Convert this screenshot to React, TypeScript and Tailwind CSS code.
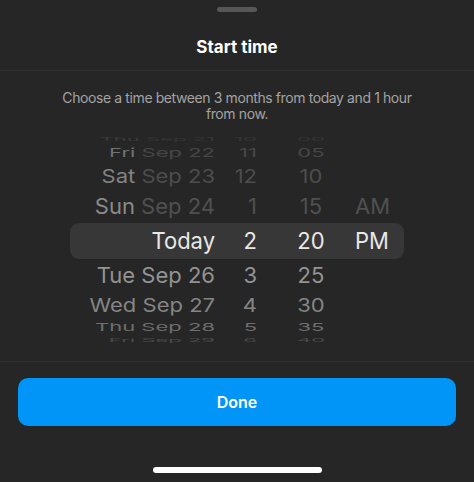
import React from 'react';

type Cell = { text: string; color: string };
type Row = {
  h: string;
  scale: string;
  day?: Cell;
  date?: Cell;
  hour?: Cell;
  minute?: Cell;
  period?: Cell;
  selected?: boolean;
};

const rows: Row[] = [
  {
    h: 'h-[7px]',
    scale: 'scale-y-[0.22]',
    day: { text: 'Thu', color: 'text-[#3a3a3a]' },
    date: { text: 'Sep 21', color: 'text-[#353535]' },
    hour: { text: '10', color: 'text-[#353535]' },
    minute: { text: '00', color: 'text-[#353535]' },
  },
  {
    h: 'h-[22px]',
    scale: 'scale-y-[0.55]',
    day: { text: 'Fri', color: 'text-[#727272]' },
    date: { text: 'Sep 22', color: 'text-[#464646]' },
    hour: { text: '11', color: 'text-[#464646]' },
    minute: { text: '05', color: 'text-[#464646]' },
  },
  {
    h: 'h-[24px]',
    scale: 'scale-y-[0.85]',
    day: { text: 'Sat', color: 'text-[#838383]' },
    date: { text: 'Sep 23', color: 'text-[#4d4d4d]' },
    hour: { text: '12', color: 'text-[#4d4d4d]' },
    minute: { text: '10', color: 'text-[#4d4d4d]' },
  },
  {
    h: 'h-[35px]',
    scale: 'scale-y-100',
    day: { text: 'Sun', color: 'text-[#8a8a8a]' },
    date: { text: 'Sep 24', color: 'text-[#505050]' },
    hour: { text: '1', color: 'text-[#505050]' },
    minute: { text: '15', color: 'text-[#505050]' },
    period: { text: 'AM', color: 'text-[#505050]' },
  },
  {
    h: 'h-[36px]',
    scale: 'scale-y-[1.04]',
    selected: true,
    date: { text: 'Today', color: 'text-[#e8e8e8]' },
    hour: { text: '2', color: 'text-[#e8e8e8]' },
    minute: { text: '20', color: 'text-[#e8e8e8]' },
    period: { text: 'PM', color: 'text-[#e8e8e8]' },
  },
  {
    h: 'h-[32px]',
    scale: 'scale-y-100',
    day: { text: 'Tue', color: 'text-[#939393]' },
    date: { text: 'Sep 26', color: 'text-[#939393]' },
    hour: { text: '3', color: 'text-[#939393]' },
    minute: { text: '25', color: 'text-[#939393]' },
  },
  {
    h: 'h-[27px]',
    scale: 'scale-y-[0.85]',
    day: { text: 'Wed', color: 'text-[#858585]' },
    date: { text: 'Sep 27', color: 'text-[#858585]' },
    hour: { text: '4', color: 'text-[#858585]' },
    minute: { text: '30', color: 'text-[#858585]' },
  },
  {
    h: 'h-[18px]',
    scale: 'scale-y-[0.5]',
    day: { text: 'Thu', color: 'text-[#6e6e6e]' },
    date: { text: 'Sep 28', color: 'text-[#6e6e6e]' },
    hour: { text: '5', color: 'text-[#6e6e6e]' },
    minute: { text: '35', color: 'text-[#6e6e6e]' },
  },
  {
    h: 'h-[7px]',
    scale: 'scale-y-[0.22]',
    day: { text: 'Fri', color: 'text-[#4a4a4a]' },
    date: { text: 'Sep 29', color: 'text-[#4a4a4a]' },
    hour: { text: '6', color: 'text-[#4a4a4a]' },
    minute: { text: '40', color: 'text-[#4a4a4a]' },
  },
];

function WheelRow({ row }: { row: Row }) {
  return (
    <div
      className={`flex items-center ${row.h} ${
        row.selected ? 'bg-[#373737] rounded-[9px]' : ''
      }`}
    >
      <div className={`w-[145px] shrink-0 text-right whitespace-nowrap ${row.scale}`}>
        {row.day && <span className={row.day.color}>{row.day.text} </span>}
        {row.date && <span className={row.date.color}>{row.date.text}</span>}
      </div>
      <div className={`w-[42px] shrink-0 text-right ${row.scale} ${row.hour?.color ?? ''}`}>
        {row.hour?.text}
      </div>
      <div className={`w-[80px] ml-[14px] shrink-0 text-center ${row.scale} ${row.minute?.color ?? ''}`}>
        {row.minute?.text}
      </div>
      <div className={`ml-[4px] text-left ${row.scale} ${row.period?.color ?? ''}`}>
        {row.period?.text}
      </div>
    </div>
  );
}

export default function App() {
  return (
    <div
      className="w-[474px] h-[482px] bg-[#262626] flex flex-col overflow-hidden"
      style={{ fontFamily: 'Inter, "Liberation Sans", sans-serif' }}
    >
      {/* header */}
      <div className="flex flex-col items-center pt-[7px] pb-[12px] border-b border-[#303030]">
        <div className="w-[40px] h-[5px] rounded-full bg-[#575757]" />
        <h1 className="mt-[24px] text-[17px] leading-[22px] font-bold text-white">Start time</h1>
      </div>

      <p className="mt-[19px] mx-auto w-[366px] text-center text-[14px] tracking-[-0.4px] leading-[16px] text-[#a3a3a3]">
        Choose a time between 3 months from today and 1 hour from now.
      </p>

      {/* wheel picker */}
      <div className="mt-[13px] mx-[70px] flex flex-col text-[22px] leading-none">
        {rows.map((row, i) => (
          <WheelRow key={i} row={row} />
        ))}
      </div>

      <div className="mt-[18px] border-t border-[#303030]" />

      <div className="px-[18px] pt-[16px]">
        <button className="w-full h-[48px] rounded-[10px] bg-[#0095f6] text-white text-[16px] font-semibold">
          Done
        </button>
      </div>

      <div className="mt-auto mb-[9px] mx-auto w-[169px] h-[6px] rounded-full bg-white" />
    </div>
  );
}
